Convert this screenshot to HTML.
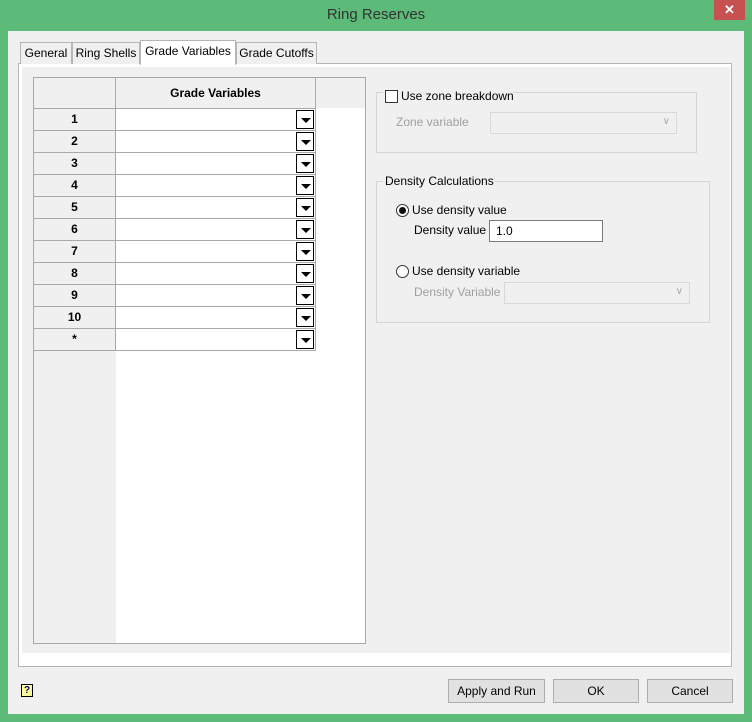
<!DOCTYPE html>
<html><head><style>
*{box-sizing:border-box;margin:0;padding:0}
body{width:752px;height:722px;background:#5cbb79;font-family:"Liberation Sans",sans-serif;font-size:12px;color:#000;position:relative;overflow:hidden}
.a{position:absolute}
.client{left:8px;top:31px;width:736px;height:683px;background:#f0f0f0}
.title{left:0;top:6px;width:752px;text-align:center;font-size:15px;color:#333}
.close{left:714px;top:0;width:31px;height:20px;background:#c75050;color:#fff;text-align:center;font-size:13px;line-height:20px;font-weight:bold}
.tab{top:42px;height:22px;border:1px solid #b5b5b5;border-bottom:none;background:#f0f0f0;text-align:center;line-height:20px}
.panel{left:18px;top:63px;width:714px;height:604px;border:1px solid #b5b5b5;background:#fff}
.inner{left:22px;top:67px;width:708px;height:586px;background:#f0f0f0}
.grid{left:33px;top:77px;width:333px;height:567px;border:1px solid #a8a8a8;background:#fff}
.cell{border-right:1px solid #a8a8a8;border-bottom:1px solid #a8a8a8}
.rn{background:#f0f0f0;font-weight:bold;text-align:center;line-height:21px}
.dd{width:18px;height:19px;border:1px solid #000;background:#fff}
.dd:after{content:"";position:absolute;left:4px;top:7px;border-left:5px solid transparent;border-right:5px solid transparent;border-top:5px solid #000}
.grp{border:1px solid #d5d5d5}
.btn{top:679px;height:24px;border:1px solid #adadad;background:#e1e1e1;text-align:center;line-height:22px}
.gray{color:#a0a0a0}
.combo{border:1px solid #d9d9d9;background:#f0f0f0}
.combo:after{content:"\2228";position:absolute;right:6px;top:3px;color:#aaa;font-size:10px}
</style></head><body>
<div class="a title">Ring Reserves</div>
<div class="a close">✕</div>
<div class="a client"></div>
<div class="a panel"></div>
<div class="a inner"></div>
<div class="a tab" style="left:20px;width:52px">General</div>
<div class="a tab" style="left:72px;width:68px">Ring Shells</div>
<div class="a tab" style="left:140px;width:96px;top:40px;height:25px;background:#fff;line-height:21px">Grade Variables</div>
<div class="a tab" style="left:236px;width:81px">Grade Cutoffs</div>

<div class="a grid">
 <div class="a" style="left:0;top:0;width:82px;height:565px;background:#f0f0f0"></div>
 <div class="a" style="left:282px;top:0;width:49px;height:30px;background:#f0f0f0"></div>
 <div class="a cell" style="left:0;top:0;width:82px;height:31px;background:#f0f0f0"></div>
 <div class="a cell" style="left:82px;top:0;width:200px;height:31px;background:#f0f0f0;font-weight:bold;text-align:center;line-height:30px">Grade Variables</div>
</div>
<div id="rows"></div>
<script>
var labels=["1","2","3","4","5","6","7","8","9","10","*"],h="";
for(var i=0;i<11;i++){var y=109+i*22;
h+='<div class="a cell rn" style="left:34px;top:'+y+'px;width:82px;height:22px">'+labels[i]+'</div>';
h+='<div class="a cell" style="left:116px;top:'+y+'px;width:200px;height:22px;background:#fff"></div>';
h+='<div class="a dd" style="left:296px;top:'+(y+1)+'px"></div>';}
document.getElementById("rows").innerHTML=h;
</script>

<div class="a grp" style="left:376px;top:92px;width:321px;height:61px"></div>
<div class="a" style="left:383px;top:88px;width:130px;height:16px;background:#f0f0f0"></div>
<div class="a" style="left:385px;top:90px;width:13px;height:13px;border:1px solid #333;background:#fff"></div>
<div class="a" style="left:401px;top:89px">Use zone breakdown</div>
<div class="a gray" style="left:396px;top:115px">Zone variable</div>
<div class="a combo" style="left:490px;top:112px;width:187px;height:22px"></div>

<div class="a grp" style="left:376px;top:181px;width:334px;height:142px"></div>
<div class="a" style="left:383px;top:174px;width:112px;height:16px;background:#f0f0f0;padding-left:2px">Density Calculations</div>
<div class="a" style="left:396px;top:204px;width:13px;height:13px;border:1px solid #333;border-radius:50%;background:#fff"><div class="a" style="left:2px;top:2px;width:7px;height:7px;border-radius:50%;background:#111"></div></div>
<div class="a" style="left:412px;top:203px">Use density value</div>
<div class="a" style="left:414px;top:223px">Density value</div>
<div class="a" style="left:489px;top:220px;width:114px;height:22px;border:1px solid #7a7a7a;background:#fff;padding:3px 0 0 6px">1.0</div>
<div class="a" style="left:396px;top:265px;width:13px;height:13px;border:1px solid #333;border-radius:50%;background:#fff"></div>
<div class="a" style="left:412px;top:264px">Use density variable</div>
<div class="a gray" style="left:414px;top:285px">Density Variable</div>
<div class="a combo" style="left:504px;top:282px;width:186px;height:22px"></div>

<div class="a" style="left:21px;top:684px;width:12px;height:13px;border:1px solid #000;background:#ffff99;font-size:10px;font-weight:bold;text-align:center;line-height:11px;color:#000080">?</div>
<div class="a btn" style="left:448px;width:97px">Apply and Run</div>
<div class="a btn" style="left:553px;width:86px">OK</div>
<div class="a btn" style="left:647px;width:86px">Cancel</div>
</body></html>
